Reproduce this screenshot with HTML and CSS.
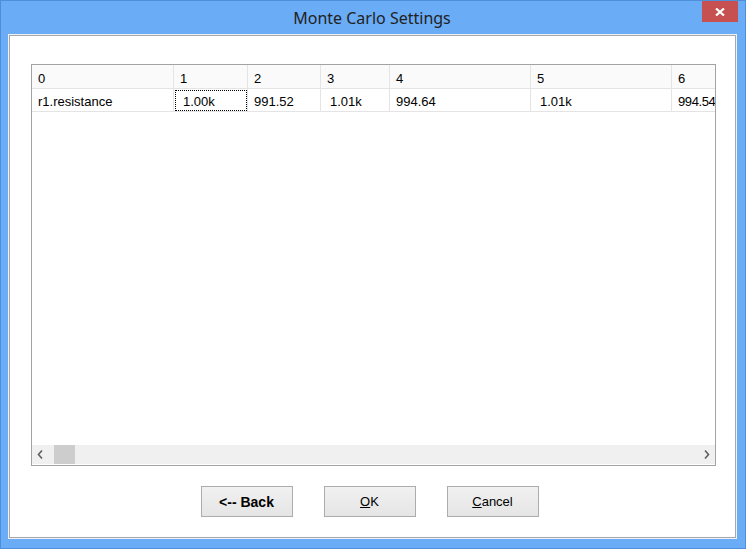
FILE: index.html
```html
<!DOCTYPE html>
<html>
<head>
  <link rel="stylesheet" href="styles.css">
</head>
<body>
  <div class="window">
    <div class="titlebar">
      <span></span>
      <span class="title">Monte Carlo Settings</span>
      <div class="close-btn">
        <svg width="10" height="8" viewBox="0 0 10 8">
          <path d="M1 0.5 L9 7.5 M9 0.5 L1 7.5" stroke="#fff" stroke-width="2.2" fill="none"/>
        </svg>
      </div>
    </div>

    <div class="client">
      <div class="grid-box">
        <div class="grid">
          <div class="cell head">0</div>
          <div class="cell head">1</div>
          <div class="cell head">2</div>
          <div class="cell head">3</div>
          <div class="cell head">4</div>
          <div class="cell head">5</div>
          <div class="cell head">6</div>

          <div class="cell">r1.resistance</div>
          <div class="cell pad focus">1.00k</div>
          <div class="cell">991.52</div>
          <div class="cell pad">1.01k</div>
          <div class="cell">994.64</div>
          <div class="cell pad">1.01k</div>
          <div class="cell last">994.54</div>
        </div>

        <div class="hscroll">
          <div class="arrow">
            <svg width="7" height="9" viewBox="0 0 7 9"><path d="M5 0.5 L1.5 4.5 L5 8.5" stroke="#606060" stroke-width="1.6" fill="none"/></svg>
          </div>
          <div class="thumb"></div>
          <div class="track"></div>
          <div class="arrow">
            <svg width="7" height="9" viewBox="0 0 7 9"><path d="M2 0.5 L5.5 4.5 L2 8.5" stroke="#606060" stroke-width="1.6" fill="none"/></svg>
          </div>
        </div>
      </div>

      <div class="buttons">
        <button class="btn bold">&lt;-- Back</button>
        <button class="btn"><u>O</u>K</button>
        <button class="btn"><u>C</u>ancel</button>
      </div>
    </div>
  </div>
</body>
</html>
```

FILE: styles.css
```css
html, body {
  margin: 0;
  padding: 0;
}

body {
  width: 746px;
  height: 549px;
  overflow: hidden;
  font-family: "Liberation Sans", Arial, sans-serif;
}

.window {
  box-sizing: border-box;
  width: 746px;
  height: 549px;
  background: #6aacf6;
  border: 1px solid #4f8ed9;
  display: flex;
  flex-direction: column;
}

.titlebar {
  height: 33px;
  display: grid;
  grid-template-columns: 1fr auto 1fr;
  align-items: start;
}

.title {
  font-family: "Noto Sans", "Open Sans", sans-serif;
  font-size: 16px;
  color: #222;
  line-height: 33px;
  margin-top: 1px;
  margin-right: 2px;
}

.close-btn {
  justify-self: end;
  width: 36px;
  height: 21px;
  margin-right: 7px;
  background: #c75050;
  display: flex;
  align-items: center;
  justify-content: center;
}

.client {
  flex: 1;
  margin: 0 8px 9px 7px;
  background: #fff;
  border: 1px solid #eef2f7;
  box-shadow: inset 0 0 0 1px #a8a8a8;
  display: flex;
  flex-direction: column;
}

.grid-box {
  margin: 29px 0 0 22px;
  width: 685px;
  height: 402px;
  box-sizing: border-box;
  border: 1px solid #a3a3a3;
  display: flex;
  flex-direction: column;
  overflow: hidden;
  background: #fff;
}

.grid {
  flex: 1;
  display: grid;
  grid-template-columns: 142px 74px 73px 69px 141px 141px 141px;
  grid-template-rows: 24px 23px;
  align-content: start;
  font-size: 13px;
  color: #000;
}

.cell {
  box-sizing: border-box;
  border-right: 1px solid #e4e4e4;
  border-bottom: 1px solid #e4e4e4;
  padding: 2px 0 0 6px;
  display: flex;
  align-items: center;
  white-space: nowrap;
}

.cell.head {
  background: #fafafa;
  padding-top: 3px;
}

.cell.pad {
  padding-left: 9px;
}

.cell.last {
  letter-spacing: -0.4px;
}

.cell.focus {
  outline: 1px dotted #000;
  outline-offset: -2px;
}

.hscroll {
  height: 19px;
  margin-bottom: 1px;
  background: #f0f0f0;
  display: flex;
}

.arrow {
  width: 17px;
  display: flex;
  align-items: center;
  justify-content: center;
}

.thumb {
  width: 21px;
  margin-left: 5px;
  background: #cdcdcd;
}

.track {
  flex: 1;
}

.buttons {
  display: flex;
  justify-content: center;
  gap: 31px;
  margin-top: 20px;
  padding-right: 6px;
}

.btn {
  width: 92px;
  height: 31px;
  box-sizing: border-box;
  border: 1px solid #acacac;
  background: linear-gradient(#f1f1f1, #e5e5e5);
  font-family: "Liberation Sans", Arial, sans-serif;
  font-size: 13px;
  color: #000;
  padding: 0;
}

.btn.bold {
  font-weight: bold;
  font-size: 14px;
}
```
